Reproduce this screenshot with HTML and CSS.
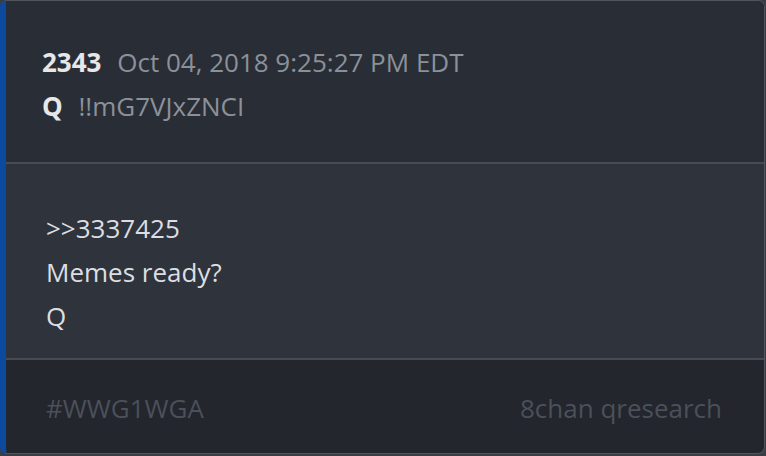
FILE: index.html
```html
<!DOCTYPE html>
<html lang="en">
<head>
  <meta charset="UTF-8" />
  <title>Post 2343</title>
  <link rel="stylesheet" href="styles.css">
</head>
<body>
  <div class="post">
    <div class="post-head">
      <div class="line">
        <span class="num">2343</span>
        <span class="meta">Oct 04, 2018 9:25:27 PM EDT</span>
      </div>
      <div class="line">
        <span class="num">Q</span>
        <span class="meta">!!mG7VJxZNCI</span>
      </div>
    </div>

    <div class="post-body">
      <p>&gt;&gt;3337425</p>
      <p>Memes ready?</p>
      <p>Q</p>
    </div>

    <div class="post-foot">
      <span>#WWG1WGA</span>
      <span>8chan qresearch</span>
    </div>
  </div>
</body>
</html>
```

FILE: styles.css
```css
:root {
  --head-bg:  #292d35;
  --body-bg:  #2f343c;
  --foot-bg:  #23262d;
  --rule:     #474c54;
  --accent:   #0b4a9e;
  --text:     #dcdee2;
  --muted:    #8c9199;
  --faint:    #4b5059;
}

body {
  margin: 0;
  background: #3a3e44;
  font-family: "Open Sans", sans-serif;
  font-size: 26px;
  line-height: 44px;
}

.post {
  width: 765px;
  height: 454px;
  box-sizing: border-box;
  display: flex;
  flex-direction: column;
  border: 1px solid #50555c;
  border-left: 6px solid var(--accent);
  border-radius: 7px;
  overflow: hidden;
  background: var(--foot-bg);
}

.post-head {
  background: var(--head-bg);
  padding: 39px 36px 34px;
  border-bottom: 2px solid var(--rule);
}

.num {
  color: #e6e7e9;
  font-weight: 700;
  margin-right: 9px;
}
.meta { color: var(--muted); }

.post-body {
  background: var(--body-bg);
  padding: 42px 40px 20px;
  border-bottom: 2px solid var(--rule);
  color: var(--text);
}
.post-body p { margin: 0; }

.post-foot {
  flex: 1;
  display: flex;
  justify-content: space-between;
  align-items: center;
  padding: 2px 42px 0 40px;
  color: var(--faint);
}
```
